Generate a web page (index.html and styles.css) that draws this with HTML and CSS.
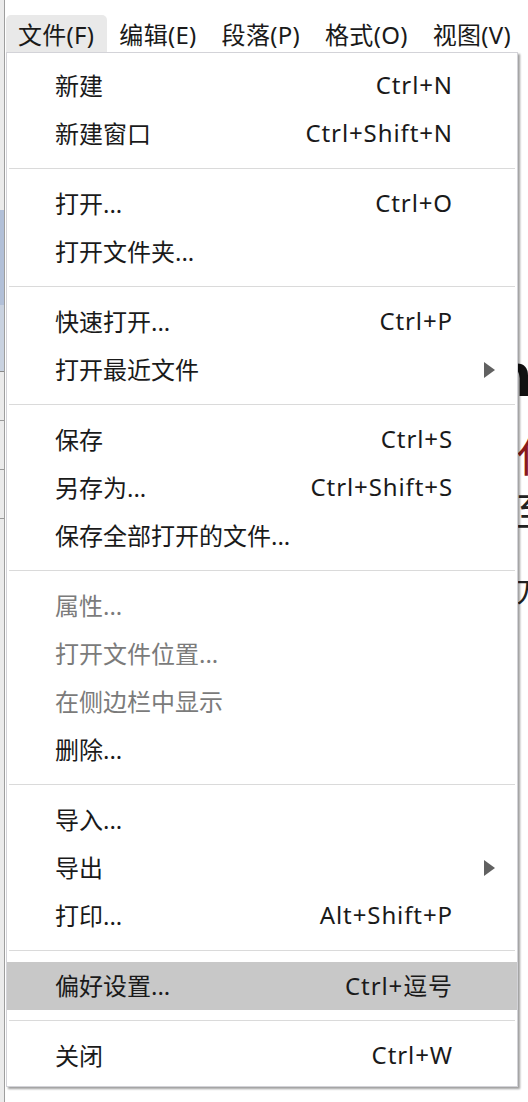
FILE: index.html
```html
<!DOCTYPE html>
<html lang="zh-CN">
<head>
<meta charset="utf-8">
<title>文件菜单</title>
<link rel="stylesheet" href="styles.css">
</head>
<body>
<div class="app">
  <div class="edge">
    <div class="edge-top"></div>
    <div class="edge-blue"></div>
    <div class="edge-pale"></div>
    <div class="edge-row"></div>
    <div class="edge-row"></div>
    <div class="edge-row"></div>
    <div class="edge-rest"></div>
  </div>
  <div class="main">
    <div class="titlebar"></div>
    <div class="menubar">
      <div class="mb-item open">文件(F)</div>
      <div class="mb-item">编辑(E)</div>
      <div class="mb-item">段落(P)</div>
      <div class="mb-item">格式(O)</div>
      <div class="mb-item">视图(V)</div>
    </div>
    <div class="doc">
      <div class="doc-n">n</div>
      <div class="doc-red">化</div>
      <div class="doc-line">至</div>
      <div class="doc-small">方</div>
    </div>
  </div>

  <div class="dropdown">
    <div class="item"><span class="label">新建</span><span class="key">Ctrl+N</span></div>
    <div class="item"><span class="label">新建窗口</span><span class="key">Ctrl+Shift+N</span></div>
    <div class="sep"></div>
    <div class="item"><span class="label">打开...</span><span class="key">Ctrl+O</span></div>
    <div class="item"><span class="label">打开文件夹...</span><span class="key"></span></div>
    <div class="sep"></div>
    <div class="item"><span class="label">快速打开...</span><span class="key">Ctrl+P</span></div>
    <div class="item"><span class="label">打开最近文件</span><span class="key"></span><span class="arrow"></span></div>
    <div class="sep"></div>
    <div class="item"><span class="label">保存</span><span class="key">Ctrl+S</span></div>
    <div class="item"><span class="label">另存为...</span><span class="key">Ctrl+Shift+S</span></div>
    <div class="item"><span class="label">保存全部打开的文件...</span><span class="key"></span></div>
    <div class="sep"></div>
    <div class="item disabled"><span class="label">属性...</span><span class="key"></span></div>
    <div class="item disabled"><span class="label">打开文件位置...</span><span class="key"></span></div>
    <div class="item disabled"><span class="label">在侧边栏中显示</span><span class="key"></span></div>
    <div class="item"><span class="label">删除...</span><span class="key"></span></div>
    <div class="sep"></div>
    <div class="item"><span class="label">导入...</span><span class="key"></span></div>
    <div class="item"><span class="label">导出</span><span class="key"></span><span class="arrow"></span></div>
    <div class="item"><span class="label">打印...</span><span class="key">Alt+Shift+P</span></div>
    <div class="sep"></div>
    <div class="item hover"><span class="label">偏好设置...</span><span class="key">Ctrl+逗号</span></div>
    <div class="sep"></div>
    <div class="item"><span class="label">关闭</span><span class="key">Ctrl+W</span></div>
  </div>
</div>
</body>
</html>
```

FILE: styles.css
```css
html, body {
  margin: 0;
  padding: 0;
}

body {
  width: 528px;
  height: 1102px;
  overflow: hidden;
  background: #ffffff;
  font-family: "Noto Sans", "Noto Sans CJK SC", sans-serif;
  color: #1a1a1a;
}

.app {
  position: relative;
  display: flex;
  height: 1102px;
  overflow: hidden;
}

/* left edge of the window behind */
.edge {
  width: 4px;
  flex: none;
  border-right: 1px solid #9e9e9e;
  display: flex;
  flex-direction: column;
  background: #ebebeb;
}

.edge-top {
  height: 210px;
}

.edge-blue {
  height: 95px;
  background: #b2c0d8;
}

.edge-pale {
  height: 66px;
  background: #c9d2e0;
  border-bottom: 1px solid #8a8a8a;
}

.edge-row {
  height: 48px;
  border-bottom: 1px solid #9a9a9a;
}

.edge-rest {
  flex: 1;
}

.main {
  flex: 1;
  display: flex;
  flex-direction: column;
  min-width: 0;
}

.titlebar {
  height: 15px;
}

.menubar {
  display: flex;
  height: 38px;
  margin-left: 1px;
}

.mb-item {
  padding: 0 13px 0 12px;
  font-size: 24px;
  line-height: 39px;
  letter-spacing: 0.3px;
  white-space: nowrap;
}

.mb-item.open {
  background: #e9e9e9;
  border-radius: 5px 5px 0 0;
}

/* document text peeking out at the right */
.doc {
  flex: 1;
  display: flex;
  flex-direction: column;
  align-items: flex-start;
  margin-left: 511px;
  overflow: hidden;
}

.doc-n {
  margin-left: -22px;
  margin-top: 290px;
  font-family: "Liberation Sans", sans-serif;
  font-weight: bold;
  font-size: 62px;
  line-height: 64px;
  color: #111111;
}

.doc-red {
  margin-top: 26px;
  font-size: 42px;
  line-height: 46px;
  color: #8a1a1a;
}

.doc-line {
  margin-top: 10px;
  font-size: 38px;
  line-height: 42px;
  color: #222222;
}

.doc-small {
  margin-top: 42px;
  font-size: 30px;
  line-height: 34px;
  color: #222222;
}

/* dropdown menu */
.dropdown {
  position: absolute;
  left: 6px;
  top: 52px;
  width: 510px;
  padding: 9px 0 6px;
  background: #ffffff;
  border: 1px solid #d3d3d8;
  box-shadow: 2px 2px 2px rgba(0, 0, 0, 0.38);
  z-index: 2;
}

.item {
  box-sizing: border-box;
  display: grid;
  grid-template-columns: 1fr auto 65px;
  align-items: center;
  height: 48px;
  padding: 0 0 4px 48px;
  font-size: 24px;
  white-space: nowrap;
}

.item .key {
  text-align: right;
  letter-spacing: 0.9px;
  margin-right: -1px;
}

.item.hover {
  background: #c8c8c8;
}

.item.disabled {
  color: #7b7b7b;
}

.arrow {
  width: 0;
  height: 0;
  margin-left: 32px;
  margin-top: 4px;
  border-left: 11px solid #616161;
  border-top: 8px solid transparent;
  border-bottom: 8px solid transparent;
}

.sep {
  height: 1px;
  margin: 10px 2px 11px;
  background: #dadada;
}
```
